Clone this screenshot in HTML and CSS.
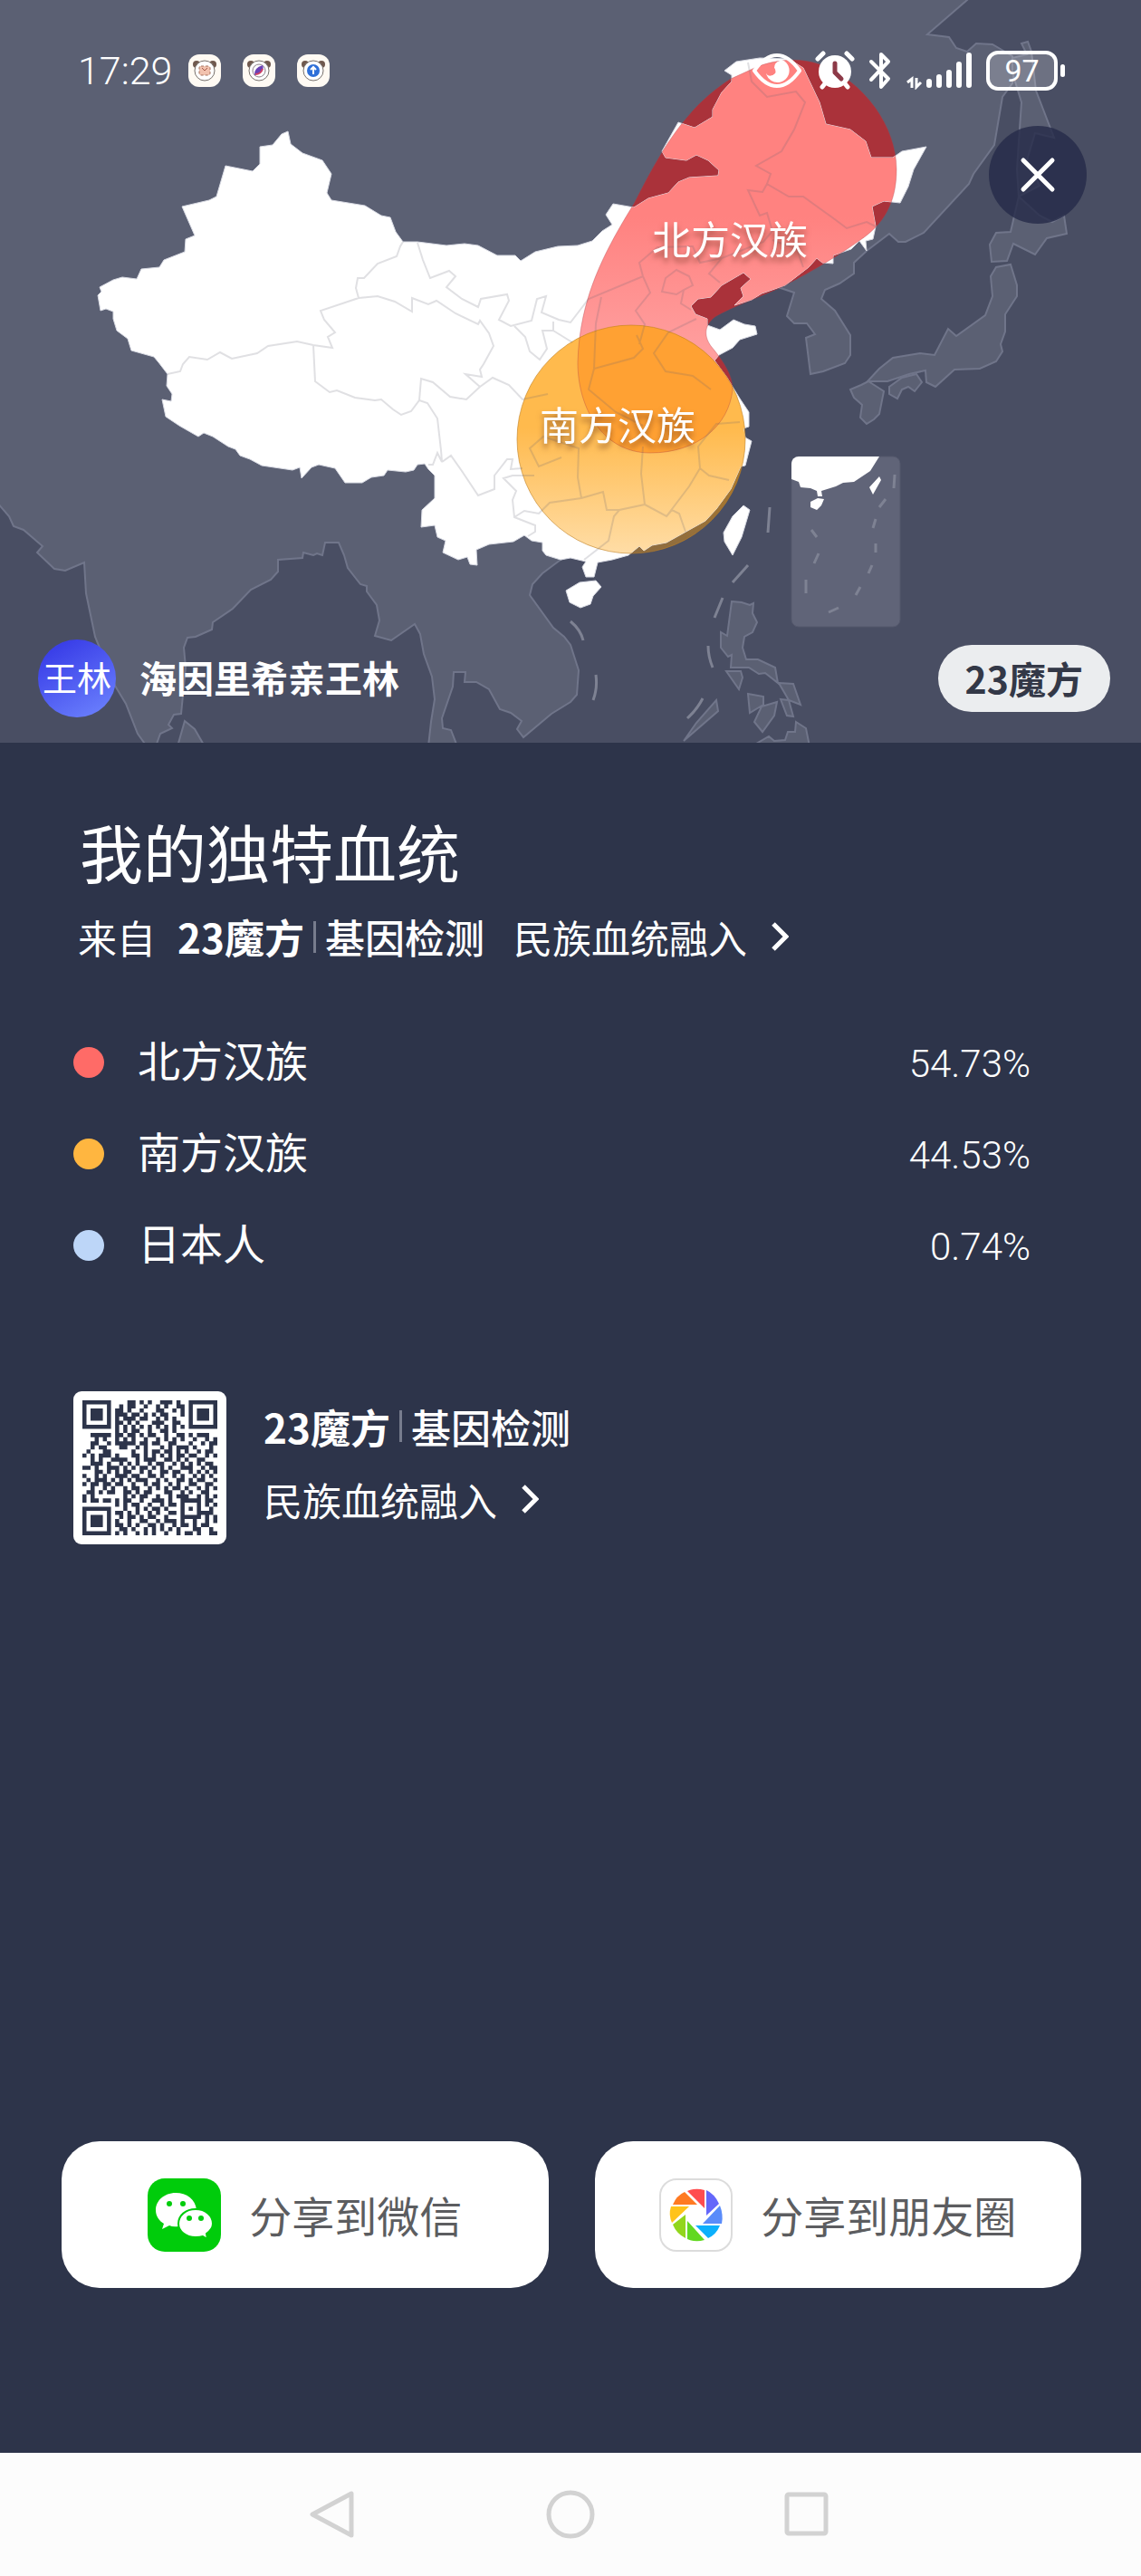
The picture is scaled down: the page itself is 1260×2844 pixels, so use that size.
FILE: index.html
```html
<!DOCTYPE html>
<html lang="zh-CN">
<head>
<meta charset="utf-8">
<meta name="viewport" content="width=device-width, initial-scale=1">
<title>我的独特血统</title>
<link rel="stylesheet" href="styles.css">
</head>
<body>
<div class="page">
  <header class="hero">
    <svg class="map" viewBox="0 0 1260 820" role="img" aria-label="血统分布地图">
      <defs>
        <path id="china" d="M318 145L321 159L334 169L356 177L366 192L361 213L366 221L403 227L421 238L431 240L437 256L445 267L461 267L493 271L513 269L528 271L549 282L569 282L575 288L591 278L616 272L638 271L654 266L665 255L676 248L669 237L677 225L700 229L716 219L738 213L749 201L761 196L793 194L794 188L782 177L769 171L758 177L735 174L731 167L749 135L767 141L787 129L787 121L797 102L808 90L808 83L800 78L813 68L839 64L871 65L887 75L905 113L912 137L939 143L956 156L962 174L986 174L996 167L1023 162L1009 187L1003 206L994 224L976 222L963 228L967 250L964 264L956 266L957 277L949 266L940 275L920 282L920 291L908 290L902 285L893 295L867 315L841 324L830 331L811 337L821 327L818 318L829 308L821 301L797 315L785 328L771 330L763 338L768 347L781 352L781 359L795 364L810 353L822 358L834 360L836 369L817 375L809 384L794 392L789 398L803 417L809 427L817 440L827 455L827 471L821 473L823 483L830 487L823 514L818 515L807 540L791 562L779 575L736 599L720 602L711 608L706 603L694 613L676 618L660 621L656 637L647 637L643 626L647 620L630 616L619 618L603 613L599 608L599 599L587 597L579 591L567 598L540 601L526 607L527 624L519 623L516 615L506 618L489 610L492 597L483 593L480 580L465 582L466 563L480 550L480 525L473 518L469 512L461 513L457 519L448 521L428 519L424 525L410 527L400 533L381 533L370 517L352 513L344 516L333 528L331 516L323 519L289 514L276 507L265 503L260 496L252 493L235 482L225 478L219 482L198 470L183 460L179 441L189 443L190 435L184 426L185 413L175 400L170 394L145 387L141 374L129 365L125 352L125 344L117 341L111 343L108 326L112 322L110 317L125 309L135 306L151 308L156 297L176 295L181 287L204 278L205 264L215 260L201 228L231 221L239 217L249 183L279 189L287 181L287 162L301 160L311 148Z"/>
        <path id="north" d="M829 77C855 64 885 64 905 71C955 90 990 140 990 187C990 225 975 248 950 265C915 290 880 308 867 315C840 328 800 342 788 351C777 361 778 372 785 382C800 400 809 415 809 430C805 470 770 500 718 500C665 500 638 450 638 400C640 330 666 280 700 225C728 170 755 120 807 87Z"/>
        <clipPath id="chinaClip"><use href="#china"/></clipPath>
        <clipPath id="southClip"><circle cx="697" cy="485" r="126"/></clipPath>
        <clipPath id="insetClip"><rect x="874" y="504" width="120" height="188" rx="8"/></clipPath>
        <linearGradient id="northFill" x1="0" y1="0" x2="0" y2="1">
          <stop offset=".4" stop-color="#ff8280"/><stop offset=".75" stop-color="#ff9f9f"/>
        </linearGradient>
        <linearGradient id="southFill" x1="0" y1="0" x2="0" y2="1">
          <stop offset=".45" stop-color="#ffba4d"/><stop offset="1" stop-color="#ffdda6"/>
        </linearGradient>
        <linearGradient id="southSea" x1="0" y1="0" x2="0" y2="1">
          <stop offset=".5" stop-color="#bb7f22"/><stop offset="1" stop-color="#8d6c40"/>
        </linearGradient>
      </defs>

      <rect class="sea" width="1260" height="820"/>
      <g class="continent">
        <path d="M-4 -4H1072L1068 0L1024 38L1048 41L1056 53L1068 57L1078 48L1096 49L1118 62L1120 80L1118 92L1107 107L1098 160L1075 192L1070 203L1020 257L1000 267L992 267L982 258L957 277L943 290L943 302L927 313L911 320L907 330L922 343L939 370L939 392L933 401L909 410L895 413L890 373L900 369L891 357L877 357L869 349L877 323L859 317L800 290L740 340L760 420L700 560L660 600L619 618L599 633L588 645L585 657L611 693L623 703L630 712L639 740L637 767L630 775L609 788L578 814L571 805L576 796L564 787L552 783L540 761L526 753L513 753L514 742L501 742L500 758L488 793L489 804L498 806L505 824H473L476 797L480 772L477 747L468 722L464 700L458 689L432 707L414 702L419 685L416 668L405 653V647L398 645L384 627L380 613L374 599H359L356 613L350 611L346 613L335 610L334 616L307 618V631L299 640L277 651L257 672L235 687L234 695L216 703L207 704L203 715L205 737L200 788L192 789L186 800L190 804L177 810L172 824H162L152 810L139 777L127 757L105 703L95 655L93 621L72 630L60 628L41 610L47 603L26 585L15 581L10 570L-4 554Z"/>
        <path d="M204 796L215 805L226 824H196Z"/>
        <path d="M1128 48L1135 46L1139 57L1144 100L1164 152L1143 147L1134 177L1148 205L1125 217L1123 187L1128 113L1118 80L1118 64L1134 60Z"/>
        <path d="M1125 217L1148 238L1162 245L1175 238L1178 258L1156 263L1143 281L1119 269L1112 288L1095 289L1093 270L1100 257L1116 256Z"/>
        <path d="M1116 292L1123 315V327L1110 347V366L1105 380L1107 388L1100 399L1082 407L1054 408L1033 427L1023 422L1022 409L1004 413L980 421H958L971 407L986 395L1016 390L1032 392L1047 363L1056 371L1088 348L1096 327L1094 305L1100 295Z"/>
        <path d="M959 421L976 432L971 457L965 463L957 468L950 461L952 447L943 439L939 430L951 425Z"/>
        <path d="M982 427L996 417L1012 413L1018 422L1010 432L1003 427L996 430L991 440L982 435Z"/>
        <path d="M808 664L819 665L828 668L832 666L831 677L836 687L831 698L822 703L820 715L824 728H837L856 737L859 754L845 743L838 744L827 737H807L808 723L804 725L796 715V698L803 702Z"/>
        <path d="M802 741H818L820 748L816 761ZM860 754L876 755L884 778L871 773ZM826 766L843 769V778L828 787ZM858 775L855 790L842 808L833 797L841 780ZM862 772L871 773L876 791L869 790ZM791 773L793 785L755 818L769 798ZM879 797L890 804L894 824H830L849 813L855 818L867 817L870 808H878Z"/>
      </g>
      <path class="dashes" d="M850 560L848 588M826 624L809 643M798 660L789 682M782 713Q782 725 787 737M776 771Q770 783 759 793M658 745Q660 760 655 773M630 686Q641 695 644 707"/>

      <use href="#north" fill="#aa323a"/>
      <circle cx="697" cy="485" r="126" fill="url(#southSea)"/>
      <g class="land">
        <use href="#china"/>
        <path d="M821 558L828 563L819 593L809 613L800 598L799 588L809 570ZM625 652L640 643L658 641L664 648L655 658L652 667L641 671L629 665Z"/>
      </g>
      <g clip-path="url(#chinaClip)">
        <use href="#north" fill="url(#northFill)"/>
        <circle cx="697" cy="485" r="126" fill="url(#southFill)"/>
      </g>
      <g clip-path="url(#southClip)"><g clip-path="url(#chinaClip)"><use href="#north" fill="#ffa133"/></g></g>
      <use href="#north" fill="none" stroke="#b03c44" stroke-opacity=".35"/>
      <circle cx="697" cy="485" r="126" fill="none" stroke="#c07f20" stroke-opacity=".6"/>

      <path class="borders" d="M445 267L442 272L438 283L417 291L402 307H395L393 318L396 329L354 343L358 353L370 367L362 372L367 384L346 381L328 377L296 382L284 390L256 396L243 389L229 397L209 394L202 402L199 410L185 413M346 381L348 421L364 433L372 431L392 439L414 442L421 441L434 452L443 458L454 454L463 442L472 445L483 462L487 497L488 510L483 500L478 513H473M396 329L417 327L436 333L455 344V329L473 336L482 332L503 346L528 358L530 354L540 368L545 382L534 402L530 408L532 416L514 413L530 427L515 441L497 438L478 422L465 418L463 442M461 268L467 287L475 307L496 299L503 305L493 317L510 330L528 339L531 330L560 325L562 332L551 353L564 360L587 354L593 330L603 327L598 345L617 353L630 356L650 330L710 305L718 323L702 343L712 358L706 380M568 360L580 372L585 388L596 397L604 385L599 365H611V355M611 365L632 378M488 510L498 503L510 520L528 547L546 540V525L560 507H566L564 518L577 517M590 525H566L556 528L570 542L566 552L568 571L591 580V587L583 592M568 571L579 564L595 567L607 555L642 550M530 427L544 417L562 425L577 441L605 435M826 69L830 90L847 107L879 101L889 113L877 143L863 167L835 183L851 192L847 203L871 217H887L905 230L919 240L935 252L957 245L967 250M847 203L842 212L826 210L839 238L847 235L853 255L843 267L797 285L783 302L795 312M797 285L773 290L765 272L726 273L706 290L710 305M887 295L880 275L853 265M664 328L658 357L656 407M747 298L761 305L765 315L755 320L747 325L731 322L735 307ZM755 320L752 335L763 342M769 352L738 367L722 390L735 410L765 415L785 430M703 370L710 385L700 395L656 407L650 430L680 455L710 470M710 493L708 523L712 557L736 570L761 537L773 517L771 493L791 468L817 466M773 517L783 525L805 530M736 570L742 563L750 567L757 587M712 557L684 563L678 570L672 597L645 618M642 550L638 527L639 495L600 482L585 495L595 515L620 505M642 550L666 543L670 563L684 563"/>

      <rect class="inset" x="874" y="504" width="120" height="188" rx="8"/>
      <g clip-path="url(#insetClip)">
        <path fill="#fff" d="M874 504H971L961 520L943 532L931 533L923 537L907 542L908 548H903L902 542L895 539L884 538L882 532L874 529ZM895 554L903 550L910 551L907 558L902 563L895 560ZM971 526L973 530L964 546L960 538Z"/>
        <path class="dashes" d="M988 524L987 539M978 551L971 560M967 573L964 583M967 600V610M963 624L959 633M950 648L945 657M926 671L915 676M896 585L902 593M904 611L899 622M890 640V655"/>
      </g>
      <text class="map-label" x="720" y="281">北方汉族</text>
      <text class="map-label" x="596" y="486">南方汉族</text>
    </svg>

    <div class="hero-content">
      <div class="status-bar">
        <time class="clock">17:29</time>
        <div class="notices">
          <svg class="notice" viewBox="0 0 36 36" aria-hidden="true"><rect width="36" height="36" rx="12" fill="#fffaf3"/><circle cx="9" cy="11" r="4" fill="#70594e"/><circle cx="27" cy="11" r="4" fill="#70594e"/><circle cx="18" cy="18" r="11" fill="#fff" stroke="#77706b"/><rect x="12" y="13" width="12" height="10" rx="2" fill="#f2c2ae" stroke="#a4705d" stroke-dasharray="3 2"/><path d="M15 15L18 18L21 15" stroke="#a55a4a" fill="none"/></svg>
          <svg class="notice" viewBox="0 0 36 36" aria-hidden="true"><rect width="36" height="36" rx="12" fill="#fffaf3"/><circle cx="9" cy="11" r="4" fill="#70594e"/><circle cx="27" cy="11" r="4" fill="#70594e"/><circle cx="18" cy="18" r="11" fill="#fff" stroke="#77706b"/><circle cx="18" cy="18" r="7" fill="#fff" stroke="#8c8089"/><path d="M13 23Q12 15 22 12Q25 20 13 23Z" fill="#6a41b5"/><path d="M14 22Q20 22 22 16" stroke="#d04467" stroke-width="2" fill="none"/></svg>
          <svg class="notice" viewBox="0 0 36 36" aria-hidden="true"><rect width="36" height="36" rx="12" fill="#fffaf3"/><circle cx="9" cy="11" r="4" fill="#70594e"/><circle cx="27" cy="11" r="4" fill="#70594e"/><circle cx="18" cy="18" r="11" fill="#fff" stroke="#77706b"/><circle cx="18" cy="18" r="7" fill="#2e6fd8"/><path d="M18 22V15M15 17L18 14L21 17" stroke="#fff" stroke-width="2" fill="none"/></svg>
        </div>
        <div class="indicators">
          <svg width="54" height="38" viewBox="0 0 54 38" aria-hidden="true"><path d="M2 19Q14 2 27 2Q40 2 52 19Q40 36 27 36Q14 36 2 19Z" fill="none" stroke="#fff" stroke-width="4"/><path d="M26 6A13 13 0 1 1 15 22Q17 26 22 24Q27 21 24 16Q24 10 30 8Q29 6 26 6Z" fill="#fff"/><path d="M27 9Q20 11 24 16Q28 21 22 24Q17 24 17 18Q18 10 27 9Z" fill="#ff8280"/></svg>
          <svg width="44" height="44" viewBox="0 0 44 44" aria-hidden="true"><circle cx="22" cy="23" r="18" fill="#fff"/><path d="M3 9L9 3M41 9L35 3M8 40L12 35M36 40L32 35" stroke="#fff" stroke-width="5" stroke-linecap="round"/><path d="M22 14V24L29 31" fill="none" stroke="#8d3a48" stroke-width="5" stroke-linecap="round" stroke-linejoin="round"/></svg>
          <svg width="26" height="42" viewBox="0 0 26 42" aria-hidden="true"><path d="M3 11L22 30L14 39V3L22 11L3 31" fill="none" stroke="#fff" stroke-width="4" stroke-linecap="round" stroke-linejoin="round"/></svg>
          <svg width="74" height="42" viewBox="0 0 74 42" aria-hidden="true"><path d="M7 40V30L2 34M12 29V39L17 34" fill="none" stroke="#fff" stroke-width="3"/><path d="M26 33V37M37 28V37M48 23V37M59 14V37M70 4V37" stroke="#fff" stroke-width="6" stroke-linecap="round"/></svg>
          <span class="battery">97</span>
        </div>
      </div>
      <button class="close" type="button" aria-label="关闭"><svg width="40" height="40" viewBox="0 0 40 40" aria-hidden="true"><path d="M4 4L36 36M36 4L4 36" stroke="#fff" stroke-width="5" stroke-linecap="round"/></svg></button>
      <div class="owner">
        <span class="avatar">王林</span>
        <span class="owner-name">海因里希亲王林</span>
        <span class="badge">23魔方</span>
      </div>
    </div>
  </header>

  <main class="content">
    <h1 class="title">我的独特血统</h1>
    <p class="source">
      <span class="from">来自</span>
      <span class="brand">23魔方<i class="divider"></i><b>基因检测</b></span>
      <a class="more" href="#fusion">民族血统融入<svg width="20" height="32" viewBox="0 0 20 32" aria-hidden="true"><path d="M3 2L17 16L3 30" fill="none" stroke="#fff" stroke-width="5"/></svg></a>
    </p>

    <table class="ancestry">
      <tbody>
        <tr><th scope="row"><i class="dot dot-north"></i>北方汉族</th><td>54.73%</td></tr>
        <tr><th scope="row"><i class="dot dot-south"></i>南方汉族</th><td>44.53%</td></tr>
        <tr><th scope="row"><i class="dot dot-japan"></i>日本人</th><td>0.74%</td></tr>
      </tbody>
    </table>

    <section class="promo">
      <svg class="qr" viewBox="0 0 169 169" role="img" aria-label="二维码"><rect width="169" height="169" rx="9" fill="#fff"/><path id="modules" fill="#2d344a"/></svg>
      <div class="promo-text">
        <span class="brand">23魔方<i class="divider"></i><b>基因检测</b></span>
        <a class="more" href="#fusion">民族血统融入<svg width="20" height="32" viewBox="0 0 20 32" aria-hidden="true"><path d="M3 2L17 16L3 30" fill="none" stroke="#fff" stroke-width="5"/></svg></a>
      </div>
    </section>

    <div class="share">
      <button class="share-button" type="button">
        <svg class="share-icon" viewBox="0 0 81 81" aria-hidden="true"><rect width="81" height="81" rx="19" fill="#00cc0b"/><path d="M31 16C18 16 9 25 9 35C9 42 13 47 18 50L16 56L24 52Q28 54 34 53L54 35C53 23 43 16 31 16Z" fill="#fff"/><path d="M53 34C42 34 34 41 34 50C34 58 42 65 53 65Q58 65 61 64L66 67L65 61Q72 56 72 50C72 41 64 34 53 34Z" fill="#fff" stroke="#00cc0b" stroke-width="2"/><g fill="#00cc0b"><circle cx="24" cy="28" r="3"/><circle cx="39" cy="28" r="3"/><circle cx="46" cy="44" r="3"/><circle cx="59" cy="44" r="3"/></g></svg>
        分享到微信
      </button>
      <button class="share-button" type="button">
        <svg class="share-icon" viewBox="0 0 81 81" aria-hidden="true"><rect x="1" y="1" width="79" height="79" rx="18" fill="#fff" stroke="#dcdcdc" stroke-width="2"/>
          <path d="M31 14Q40 10 50 13V33Z" fill="#ff4d4f"/><path d="M52 13Q61 17 66 28L52 41Z" fill="#6467fa"/><path d="M67 30Q71 40 69 50H48Z" fill="#5a8cfa"/><path d="M67 52Q63 62 54 66L40 52Z" fill="#0cb0fc"/><path d="M50 68Q40 71 31 67V47Z" fill="#62d820"/><path d="M29 66Q19 61 15 51L29 40Z" fill="#92d61c"/><path d="M14 49Q10 40 13 31H33Z" fill="#ffc31a"/><path d="M15 29Q19 19 28 15L42 29Z" fill="#ff7a22"/></svg>
        分享到朋友圈
      </button>
    </div>
  </main>

  <nav class="system-nav" aria-label="系统导航">
    <button type="button" aria-label="返回"><svg width="54" height="54" viewBox="0 0 54 54" aria-hidden="true"><path d="M46 4V50L3 27Z"/></svg></button>
    <button type="button" aria-label="主页"><svg width="54" height="54" viewBox="0 0 54 54" aria-hidden="true"><circle cx="27" cy="27" r="24"/></svg></button>
    <button type="button" aria-label="最近任务"><svg width="54" height="54" viewBox="0 0 54 54" aria-hidden="true"><rect x="5" y="5" width="43" height="43" rx="2"/></svg></button>
  </nav>
</div>
<script src="qr.js"></script>
</body>
</html>
```

FILE: styles.css
```css
* { box-sizing: border-box; }

body {
  margin: 0;
  background: #2d344a;
  color: #fff;
  font-family: "Noto Sans CJK SC", sans-serif;
}

button { border: 0; padding: 0; font: inherit; cursor: pointer; }
svg { display: block; flex: none; }

.page {
  display: flex;
  flex-direction: column;
  min-height: 100vh;
}

/* Map header */
.hero { display: grid; }
.map, .hero-content { grid-area: 1 / 1; min-width: 0; }
.map { width: 100%; height: auto; }

.sea { fill: #494e63; }
.continent { fill: #5b6073; stroke: #70758a; stroke-width: 2; }
.land { fill: #fff; stroke: #d9dbe4; }
.borders { fill: none; stroke: #646473; stroke-opacity: .2; stroke-width: 2; }
.dashes { fill: none; stroke: #7e8293; stroke-width: 3; }
.inset { fill: #606478; stroke: #55596d; }
.map-label {
  fill: #fff;
  font-size: 43px;
  filter: drop-shadow(0 5px 3px rgba(90, 40, 20, .55));
}

.hero-content {
  position: relative;
  display: flex;
  flex-direction: column;
  padding: 54px 34px 28px 42px;
}

.status-bar {
  display: flex;
  align-items: center;
  height: 48px;
  padding: 0 58px 0 44px;
}
.clock { font: 300 43px/48px Roboto, sans-serif; }
.notices { display: flex; gap: 24px; margin-left: 18px; }
.notice { width: 36px; height: 36px; }
.indicators { display: flex; align-items: center; gap: 15px; margin-left: auto; }
.battery {
  position: relative;
  width: 79px;
  height: 44px;
  border: 4px solid #fff;
  border-radius: 13px;
  background: rgba(255, 255, 255, .2);
  font: 400 34px/36px Roboto, sans-serif;
  text-align: center;
}
.battery::after {
  content: "";
  position: absolute;
  top: 11px;
  right: -12px;
  width: 5px;
  height: 14px;
  border-radius: 3px;
  background: #fff;
}

.close {
  display: grid;
  place-items: center;
  align-self: flex-end;
  width: 108px;
  height: 108px;
  margin: 37px 26px 0 0;
  border-radius: 50%;
  background: rgba(38, 42, 72, .8);
}

.owner {
  display: flex;
  align-items: center;
  height: 86px;
  margin-top: auto;
}
.avatar {
  width: 86px;
  height: 86px;
  border-radius: 50%;
  background: linear-gradient(150deg, #3a3fe8 15%, #6f86ff);
  font-size: 38px;
  line-height: 82px;
  text-align: center;
}
.owner-name { margin-left: 26px; padding-bottom: 4px; font-size: 41px; font-weight: 700; }
.badge {
  height: 74px;
  margin-left: auto;
  padding: 0 30px;
  border-radius: 37px;
  background: #ebedef;
  color: #333847;
  font-size: 41px;
  font-weight: 700;
  line-height: 72px;
}

/* Result */
.content {
  display: flex;
  flex: 1;
  flex-direction: column;
  padding: 78px 66px 182px 68px;
}

.title { margin: 0 0 22px 20px; font-size: 70px; font-weight: 400; line-height: 84px; }

.source {
  display: flex;
  align-items: center;
  margin: 0 0 54px 18px;
  font-size: 43px;
  line-height: 60px;
}
.brand { display: flex; align-items: center; margin-right: 32px; font-size: 44px; font-weight: 700; line-height: 60px; }
.brand b { font-weight: 500; }
.from { margin-right: 24px; }
.divider { width: 3px; height: 35px; margin: 0 10px; background: #777c8d; }
.more { display: flex; align-items: center; gap: 26px; color: #fff; font-size: 43px; line-height: 60px; text-decoration: none; }

.ancestry { width: 100%; border-collapse: collapse; line-height: 60px; }
.ancestry tr { height: 101px; }
.ancestry th { padding: 0 0 0 13px; font-size: 47px; font-weight: 400; text-align: left; }
.ancestry td { padding: 12px 56px 0 0; font-family: Roboto, sans-serif; font-size: 42px; font-weight: 300; text-align: right; }
.dot {
  display: inline-block;
  width: 34px;
  height: 34px;
  margin-right: 37px;
  border-radius: 50%;
  vertical-align: -1px;
}
.dot-north { background: #ff6b67; }
.dot-south { background: #ffb640; }
.dot-japan { background: #bdd6f8; }

.promo { display: flex; align-items: center; gap: 41px; margin: 115px 0 0 13px; }
.qr { width: 169px; height: 169px; }
.promo-text { display: flex; flex-direction: column; gap: 20px; padding-bottom: 12px; }

.share {
  display: grid;
  grid-template-columns: 1fr 1fr;
  gap: 51px;
  margin-top: auto;
}
.share-button {
  display: flex;
  align-items: center;
  justify-content: center;
  gap: 31px;
  height: 162px;
  border-radius: 42px;
  background: #fff;
  color: #5c5d60;
  font-size: 47px;
  line-height: 60px;
}
.share-icon { width: 81px; height: 81px; }

.system-nav {
  display: flex;
  align-items: center;
  justify-content: center;
  gap: 207px;
  height: 136px;
  background: #fcfcfc;
}
.system-nav button { background: none; }
.system-nav svg { fill: none; stroke: #d2d2d2; stroke-width: 5; stroke-linejoin: round; }
```

FILE: qr.js
```js
// One string per row of the code; "#" is a dark module.
const rows = [
  "#######....##.#.#..###.#..#######",
  "#.....#..#.##..#..#.#..##.#.....#",
  "#.###.#.##.#..#...##..#.#.#.###.#",
  "#.###.#.###.##.#.#.##...#.#.###.#",
  "#.###.#.#.###.##..#.#.#...#.###.#",
  "#.....#.##.#.#...###..##..#.....#",
  "#######.#.#.#.#.#.#.#.#.#.#######",
  "........#.#.##..#..##.#..........",
  "..#####.##.##.#.##..#..##.#.###..",
  "...#.#..#.#.#..#..#.#.#.#..#..#.#",
  "..##..#.#####.##.##..##...#..#.##",
  "..#.##...##..#.#...#.#.###.#...#.",
  ".#...##.....#..#.##.##.#.#..#.##.",
  "#.#.###.#...##.#.#.#.#.##.##..#.#",
  "..#.#..####..#.###..##.#.#..##...",
  "..###.#..#.#.#..#.##..#.#.#.#.##.",
  "##.#..###.#.#.##.#.#.#..###..#.##",
  "...##.#.#.##..#.#..##.##..#.#.#.#",
  "#..#.#..###.##..##.#..#.#..#.#.#.",
  ".#.###.#.#.#.###..#.#..##.#.##..#",
  "#.##.##.##..#..#.##..#.#..##..##.",
  "..#..#.#..#.##..#.#.#.##.#..#.#.#",
  ".##.#.##..##.#.##...##..#.#..##..",
  "#.#.......#.#.##..#..#.###..#.#.#",
  "#.##.##.#.##..#..###.#..#####.##.",
  "........#.#.##..#..#.##.#...#.#.#",
  "#######...#..#.#.##.#...#.#.#..#.",
  "#.....#.##.#.#..#.#..##.#...####.",
  "#.###.#..#.##.#.##..#...#####.#.#",
  "#.###.#.#..#..##..#.###.#..#..#.#",
  "#.###.#.##.#.#..##.#..#.##.#.##..",
  "#.....#..##.#..#.#.#.#.#...##..#.",
  "#######.#.#..#.#.#..#..#.##.#..##"
];
const size = 149 / rows.length;
document.getElementById("modules").setAttribute("d", rows.map((row, y) =>
  [...row].map((cell, x) => cell === "#"
    ? `M${10 + x * size} ${10 + y * size}h${size}v${size}h${-size}z` : "").join("")
).join(""));
```
